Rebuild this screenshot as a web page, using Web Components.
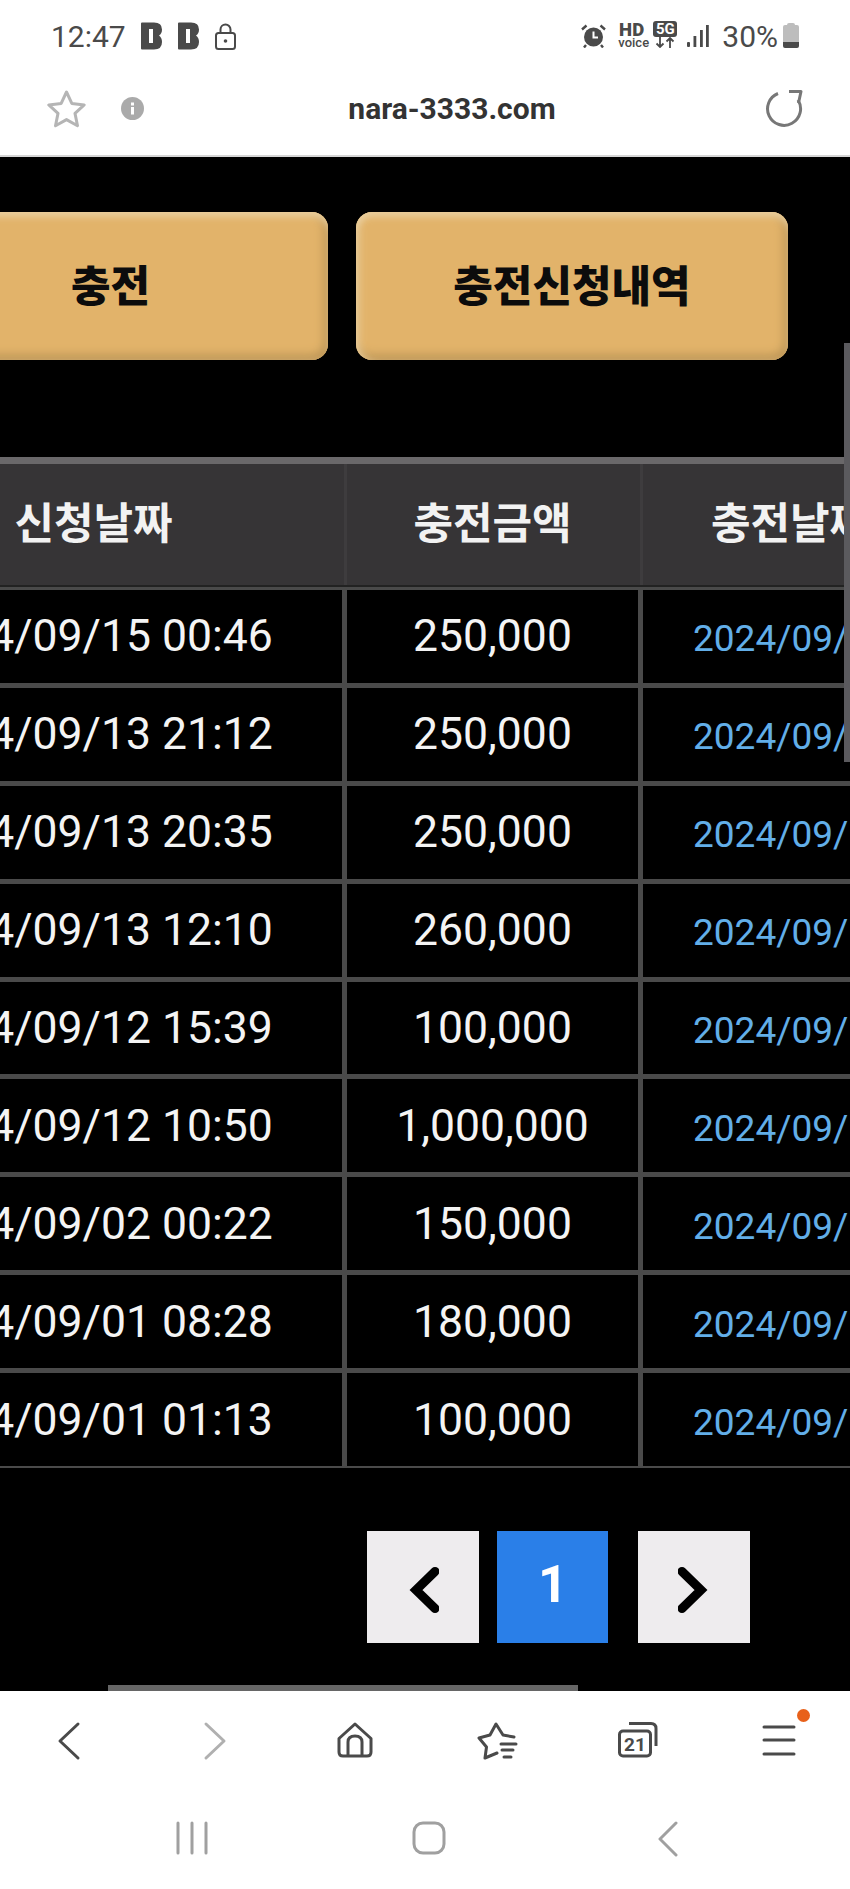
<!DOCTYPE html>
<html lang="ko">
<head>
<meta charset="utf-8">
<title>nara-3333.com</title>
<style>
  html, body { margin: 0; height: 100%; background: #000; }
  body { font-family: Roboto, "Noto Sans CJK KR", sans-serif; }
  #phone { width: 850px; height: 1889px; display: flex; flex-direction: column; overflow: hidden; }
</style>
</head>
<body>
<div id="phone">
  <status-bar></status-bar>
  <url-bar>nara-3333.com</url-bar>
  <charge-page>
    <action-button slot="actions" style="--w:435px">충전</action-button>
    <action-button slot="actions" style="--w:432px">충전신청내역</action-button>
    <charge-table slot="table">
      <charge-row requested="2024/09/15 00:46" amount="250,000"></charge-row>
      <charge-row requested="2024/09/13 21:12" amount="250,000"></charge-row>
      <charge-row requested="2024/09/13 20:35" amount="250,000"></charge-row>
      <charge-row requested="2024/09/13 12:10" amount="260,000"></charge-row>
      <charge-row requested="2024/09/12 15:39" amount="100,000"></charge-row>
      <charge-row requested="2024/09/12 10:50" amount="1,000,000"></charge-row>
      <charge-row requested="2024/09/02 00:22" amount="150,000"></charge-row>
      <charge-row requested="2024/09/01 08:28" amount="180,000"></charge-row>
      <charge-row requested="2024/09/01 01:13" amount="100,000"></charge-row>
    </charge-table>
    <page-button slot="pager" kind="prev"></page-button>
    <page-button slot="pager" kind="num">1</page-button>
    <page-button slot="pager" kind="next"></page-button>
  </charge-page>
  <browser-nav></browser-nav>
  <system-nav></system-nav>
</div>

<script>
class StatusBar extends HTMLElement {
  constructor() {
    super();
    this.attachShadow({ mode: 'open' });
    const bIcon = `<svg width="21" height="28" viewBox="0 0 21 28"><path fill="#4a4a4a" fill-rule="evenodd" d="M0 1.500Q0 .5 1 .5H13Q21 .5 21 7.500Q21 11.500 18 13.500Q21 15.500 21 20Q21 27.500 13 27.500H1Q0 27.500 0 26.500ZM8 7V21H12V7Z"/></svg>`;
    this.shadowRoot.innerHTML = `
      <style>
        :host { display: flex; align-items: center; height: 70px; padding: 2px 50px 0 51px; box-sizing: border-box; background: #fff; color: #4a4a4a; font-size: 30px; }
        .left, .right { display: flex; align-items: center; }
        .left { gap: 16px; }
        .right { margin-left: auto; }
        .time { margin-right: -1px; }
        .hd { display: block; margin: 0 8px 0 12px; font-weight: 700; width: 27px; text-align: center; }
        .hd b { display: block; font-size: 18.5px; line-height: 13px; letter-spacing: .4px; }
        .hd i { display: block; font-style: normal; font-size: 13px; line-height: 10px; font-weight: 500; margin-top: 1px; }
        .fiveg { display: flex; flex-direction: column; align-items: center; width: 24px; margin-top: -3px; }
        .fiveg b { display: block; width: 24px; height: 16px; border-radius: 3px; background: #4a4a4a; color: #fff; font-size: 15px; line-height: 16px; text-align: center; }
        .pct { margin: 0 5px 0 13px; }
      </style>
      <div class="left">
        <span class="time">12:47</span>
        ${bIcon}${bIcon}
        <svg width="21" height="27" viewBox="0 0 21 27" fill="none" stroke="#4a4a4a" stroke-width="2"><rect x="1" y="10" width="19" height="16" rx="2.5"/><path d="M5.500 10V6.500a5 5 0 0 1 10 0V10"/><circle cx="10.5" cy="18" r="1.8" fill="#4a4a4a" stroke="none"/></svg>
      </div>
      <div class="right">
        <svg width="25" height="24" viewBox="0 0 25 24"><circle cx="12.5" cy="13" r="9.5" fill="#4a4a4a"/><path d="M12.500 7.500v6h4.500" fill="none" stroke="#fff" stroke-width="2"/><path d="M1 5.500l4.500-4M24 5.500l-4.500-4M5 21l-2 2.500M20 21l2 2.500" stroke="#4a4a4a" stroke-width="2.4" fill="none"/></svg>
        <div class="hd"><b>HD</b><i>voice</i></div>
        <div class="fiveg"><b>5G</b><svg width="20" height="11" viewBox="0 0 20 11" fill="none" stroke="#4a4a4a" stroke-width="1.8"><path d="M5 0v10M1.500 6.500L5 10l3.500-3.500M15 11V1M11.500 4.500L15 1l3.500 3.500"/></svg></div>
        <svg style="margin-left:10px" width="22" height="24" viewBox="0 0 22 24" fill="#4a4a4a"><rect x="0" y="18" width="3" height="5" rx="1"/><rect x="6.500" y="12" width="2.800" height="11"/><rect x="13" y="6" width="2.800" height="17"/><rect x="19" y="1" width="2.800" height="22"/></svg>
        <span class="pct">30%</span>
        <svg width="17" height="26" viewBox="1 0 17 26"><path fill="#bdbdbd" d="M5 2Q5 0 7 0H11Q13 0 13 2H15Q17 2 17 4V19H1V4Q1 2 3 2Z"/><path fill="#4a4a4a" d="M1 19H17V23Q17 25 15 25H3Q1 25 1 23Z"/></svg>
      </div>
    `;
  }
}

class UrlBar extends HTMLElement {
  constructor() {
    super();
    this.attachShadow({ mode: 'open' });
    this.shadowRoot.innerHTML = `
      <style>
        :host { display: flex; align-items: center; height: 87px; padding: 0 47px 8px 47px; box-sizing: border-box; background: #fff; border-bottom: 2px solid #d6d6d6; }
        .info { margin-left: 35px; }
        .url { flex: 1; text-align: center; padding-right: 5px; font-weight: 700; font-size: 30px; color: #333; }
        .reload { margin-top: -2px; }
      </style>
      <svg width="39" height="38" viewBox="0 0 39 38" fill="none" stroke="#b5b5b5" stroke-width="3" stroke-linejoin="round"><path d="M19.500 2l5.300 11.400 12.400 1.500-9.200 8.500 2.500 12.300-11-6.100-11 6.100 2.500-12.300-9.200-8.500 12.400-1.500z"/></svg>
      <svg class="info" width="23" height="23" viewBox="0 0 23 23"><circle cx="11.5" cy="11.5" r="11.500" fill="#aaa"/><path d="M10 10h3v7.500h-3zM10 5.500h3v3h-3z" fill="#fff"/></svg>
      <div class="url"><slot></slot></div>
      <svg class="reload" width="38" height="38" viewBox="0 0 38 38" fill="none" stroke="#777" stroke-width="3" stroke-linejoin="round"><path d="M13 4.500A16.500 16.500 0 1 0 33 11"/><path d="M24 2.500H36L33.500 14"/></svg>
    `;
  }
}

class ChargePage extends HTMLElement {
  constructor() {
    super();
    this.attachShadow({ mode: 'open' });
    this.shadowRoot.innerHTML = `
      <style>
        :host { display: block; position: relative; flex: 1; min-height: 0; background: #000; overflow: hidden; }
        .wide { width: 1300px; margin-left: -155px; }
        .actions { display: flex; gap: 28px; padding: 55px 0 0 48px; }
        .table { margin-top: 97px; }
        .pager { display: flex; gap: 18px; width: 851px; justify-content: flex-end; padding: 63px 0 0 0; margin-left: 54px; box-sizing: border-box; }
        .pager ::slotted(:last-child) { margin-left: 12px; }
        .vbar { position: absolute; right: 0; top: 186px; width: 6px; height: 419px; background: #5b5a5e; }
        .hbar { position: absolute; left: 108px; bottom: 0; width: 470px; height: 6px; background: #666; }
      </style>
      <div class="wide">
        <div class="actions"><slot name="actions"></slot></div>
        <div class="table"><slot name="table"></slot></div>
        <div class="pager"><slot name="pager"></slot></div>
      </div>
      <div class="vbar"></div>
      <div class="hbar"></div>
    `;
  }
}

class ActionButton extends HTMLElement {
  constructor() {
    super();
    this.attachShadow({ mode: 'open' });
    this.shadowRoot.innerHTML = `
      <style>
        :host { display: flex; align-items: center; justify-content: center; width: var(--w); height: 148px; padding-bottom: 6px; box-sizing: border-box; border-radius: 16px; background: #e2b36a; color: #0c0c0c; font: 900 43px "Noto Sans CJK KR", sans-serif;
          box-shadow: inset 0 7px 7px -2px #e9cd9c, inset 7px 0 8px -4px #e9cd9c, inset -8px 0 8px -3px #c29a5a, inset 0 -9px 8px -3px #c29a5a; }
      </style>
      <slot></slot>
    `;
  }
}

class ChargeTable extends HTMLElement {
  constructor() {
    super();
    this.attachShadow({ mode: 'open' });
    this.shadowRoot.innerHTML = `
      <style>
        :host { display: block; width: 1092px; background: #4a4a4a; border-bottom: 2px solid #4a4a4a; --cols: 497px 291px 294px; }
        .head { display: grid; grid-template-columns: var(--cols); column-gap: 5px; height: 121px; background: #363436; border-top: 7px solid #6a686a; border-bottom: 2px solid #222; color: #f2f2f2; font: 700 43px "Noto Sans CJK KR", sans-serif; }
        .head div { display: flex; align-items: center; justify-content: center; padding-bottom: 10px; }
        .head div + div { box-shadow: -3px 0 0 #3e3c3e; }
        .rows { display: grid; row-gap: 5px; padding-top: 3px; }
      </style>
      <div class="head"><div>신청날짜</div><div>충전금액</div><div>충전날짜</div></div>
      <div class="rows"><slot></slot></div>
    `;
  }
}

class ChargeRow extends HTMLElement {
  constructor() {
    super();
    this.attachShadow({ mode: 'open' });
    this.shadowRoot.innerHTML = `
      <style>
        :host { display: grid; grid-template-columns: 497px 291px 294px; column-gap: 5px; height: 92.9px; }
        div { display: flex; align-items: center; justify-content: center; background: #000; color: #f4f4f4; font-size: 44.5px; white-space: nowrap; box-sizing: border-box; }
        .done { justify-content: flex-start; color: #62aee8; font-size: 37px; padding: 5px 0 0 50px; }
      </style>
      <div class="req"></div><div class="amount"></div><div class="done">2024/09/</div>
    `;
  }

  connectedCallback() {
    this.shadowRoot.querySelector('.req').textContent = this.getAttribute('requested');
    this.shadowRoot.querySelector('.amount').textContent = this.getAttribute('amount');
  }
}

class PageButton extends HTMLElement {
  constructor() {
    super();
    this.attachShadow({ mode: 'open' });
    const kind = this.getAttribute('kind');
    const arrows = {
      prev: '<svg width="30" height="46" viewBox="0 0 30 46" fill="none" stroke="#000" stroke-width="9" stroke-linejoin="miter" stroke-linecap="round"><path d="M26 4.500L7 23l19 18.500"/></svg>',
      next: '<svg width="30" height="46" viewBox="0 0 30 46" fill="none" stroke="#000" stroke-width="9" stroke-linejoin="miter" stroke-linecap="round"><path d="M4 4.500L23 23 4 41.500"/></svg>'
    };
    this.shadowRoot.innerHTML = `
      <style>
        :host { display: flex; align-items: center; justify-content: center; width: 112px; height: 112px; box-sizing: border-box; padding-top: 6px; background: #eeecee; }
        :host([kind="prev"]) { padding-left: 1px; }
        :host([kind="next"]) { padding-right: 3px; }
        :host([kind="num"]) { width: 111px; padding: 0 0 6px 1px; background: #2a7fe8; color: #fff; font: 700 52px Roboto, sans-serif; }
      </style>
      ${arrows[kind] || '<slot></slot>'}
    `;
  }
}

class BrowserNav extends HTMLElement {
  constructor() {
    super();
    this.attachShadow({ mode: 'open' });
    this.shadowRoot.innerHTML = `
      <style>
        :host { display: block; height: 108px; background: #fff; }
        .row { display: grid; grid-template-columns: 138px 154px 125px 159px 124px 158px; height: 100%; box-sizing: border-box; padding: 31px 0 0; }
        .slot { display: flex; justify-content: center; align-items: flex-start; position: relative; }
        svg { display: block; overflow: visible; }
        .tabs { font: 700 19px Roboto, sans-serif; }
        .dot { position: absolute; left: 97px; top: -13px; width: 13px; height: 13px; border-radius: 50%; background: #e8611a; }
      </style>
      <div class="row">
        <div class="slot"><svg width="22" height="38" viewBox="0 0 22 38" fill="none" stroke="#4a4a4a" stroke-width="3" stroke-linecap="round" stroke-linejoin="round"><path d="M20 2L2 19l18 17"/></svg></div>
        <div class="slot"><svg width="22" height="38" viewBox="0 0 22 38" fill="none" stroke="#b0b0b0" stroke-width="3" stroke-linecap="round" stroke-linejoin="round"><path d="M2 2l18 17L2 36"/></svg></div>
        <div class="slot"><svg width="36" height="36" viewBox="0 0 36 36" fill="none" stroke="#4a4a4a" stroke-width="3" stroke-linejoin="round"><path d="M2 16.500L18 2l16 14.500V30q0 4-4 4H6q-4 0-4-4z"/><path d="M11 34V20q0-6 7-6t7 6v14"/></svg></div>
        <div class="slot"><svg width="40" height="38" viewBox="0 0 40 38" fill="none" stroke="#4a4a4a" stroke-width="3" stroke-linejoin="round" stroke-linecap="round"><path d="M37 15L26 13 19 2 13 13 2 16 9.500 25 8 36 20 31"/><path d="M24 22H39M25 28H36M27 35H34"/></svg></div>
        <div class="slot"><svg width="40" height="36" viewBox="0 0 40 36" fill="none" stroke="#4a4a4a" stroke-width="3" stroke-linejoin="round"><rect x="1.500" y="9" width="31" height="25" rx="3.500"/><path d="M11 1.500H33q5 0 5 5V24"/><text x="17" y="29" text-anchor="middle" fill="#4a4a4a" stroke="none" class="tabs">21</text></svg></div>
        <div class="slot"><svg style="margin-top:2px" width="34" height="32" viewBox="0 0 34 32" fill="none" stroke="#4a4a4a" stroke-width="3" stroke-linecap="round"><path d="M2 3H32M2 16H32M2 30H32"/></svg><span class="dot"></span></div>
      </div>
    `;
  }
}

class SystemNav extends HTMLElement {
  constructor() {
    super();
    this.attachShadow({ mode: 'open' });
    this.shadowRoot.innerHTML = `
      <style>
        :host { display: flex; height: 90px; background: #fff; box-sizing: border-box; padding: 22px 0 0 175px; align-items: flex-start; }
        svg { display: block; }
        .home { margin-left: 203px; }
        .back { margin-left: 211px; }
      </style>
      <svg width="34" height="34" viewBox="0 0 34 34" stroke="#a0a0a0" stroke-width="3" stroke-linecap="round"><path d="M3 2V32M17 2V32M31 2V32"/></svg>
      <svg class="home" width="34" height="34" viewBox="0 0 34 34" fill="none" stroke="#a0a0a0" stroke-width="3"><rect x="2" y="2" width="30" height="30" rx="9"/></svg>
      <svg class="back" width="22" height="36" viewBox="0 0 22 36" fill="none" stroke="#a0a0a0" stroke-width="3" stroke-linecap="round" stroke-linejoin="round"><path d="M19 2L3 18l16 16"/></svg>
    `;
  }
}

customElements.define('status-bar', StatusBar);
customElements.define('url-bar', UrlBar);
customElements.define('charge-page', ChargePage);
customElements.define('action-button', ActionButton);
customElements.define('charge-table', ChargeTable);
customElements.define('charge-row', ChargeRow);
customElements.define('page-button', PageButton);
customElements.define('browser-nav', BrowserNav);
customElements.define('system-nav', SystemNav);
</script>
</body>
</html>
